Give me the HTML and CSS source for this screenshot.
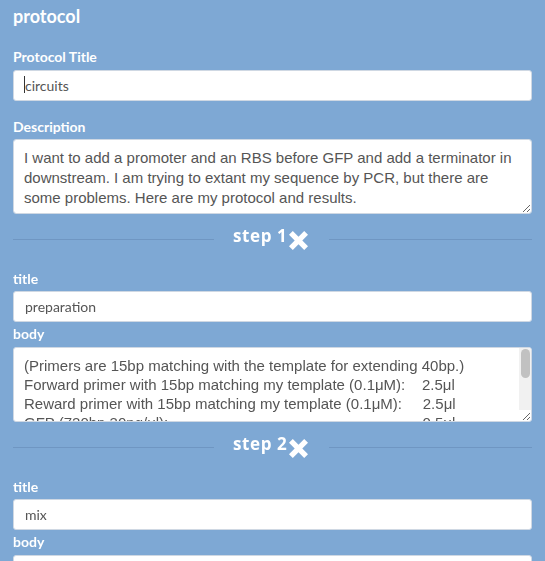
FILE: index.html
```html
<!DOCTYPE html>
<html>
<head>
<meta charset="utf-8">
<link rel="stylesheet" href="styles.css">
</head>
<body>
<main class="page">
  <h1 class="heading">protocol</h1>
  <label class="label label-first">Protocol Title</label>
  <div class="field-wrap">
    <input class="input" type="text" value="circuits">
    <span class="caret"></span>
  </div>
  <label class="label label-desc">Description</label>
  <textarea class="textarea desc">I want to add a promoter and an RBS before GFP and add a terminator in downstream. I am trying to extant my sequence by PCR, but there are some problems. Here are my protocol and results.</textarea>

  <section class="step">
    <div class="sep">
      <span class="sep-line sep-left"></span>
      <span class="sep-title"><span class="step-text">step 1</span><svg class="x" viewBox="0 0 20 20" width="19" height="19"><path d="M0 4 L4 0 L10 6 L16 0 L20 4 L14 10 L20 16 L16 20 L10 14 L4 20 L0 16 L6 10 Z" fill="#fff"/></svg></span>
      <span class="sep-line"></span>
    </div>
    <label class="label label-title">title</label>
    <input class="input" type="text" value="preparation">
    <label class="label label-body">body</label>
    <div class="ta-wrap">
      <textarea class="textarea body-ta">(Primers are 15bp matching with the template for extending 40bp.)
Forward primer with 15bp matching my template (0.1μM):    2.5μl
Reward primer with 15bp matching my template (0.1μM):     2.5μl
GFP (720bp 30ng/μl):                                                             0.5μl
dNTP:                                                                                      2.5μl</textarea>
      <div class="scroll-track"><div class="scroll-thumb"></div></div>
    </div>
  </section>

  <section class="step">
    <div class="sep">
      <span class="sep-line sep-left"></span>
      <span class="sep-title"><span class="step-text">step 2</span><svg class="x" viewBox="0 0 20 20" width="19" height="19"><path d="M0 4 L4 0 L10 6 L16 0 L20 4 L14 10 L20 16 L16 20 L10 14 L4 20 L0 16 L6 10 Z" fill="#fff"/></svg></span>
      <span class="sep-line"></span>
    </div>
    <label class="label label-title">title</label>
    <input class="input" type="text" value="mix">
    <label class="label label-body">body</label>
    <textarea class="textarea body-ta"></textarea>
  </section>
</main>
</body>
</html>
```

FILE: styles.css
```css
html, body {
  margin: 0;
  padding: 0;
  background: #7ea8d4;
  overflow: hidden;
}
.page {
  display: flex;
  flex-direction: column;
  padding: 0 13px;
  font-family: "Lato", sans-serif;
}
.heading {
  margin: 4px 0 0 0;
  font-family: "Lato", sans-serif;
  font-size: 18px;
  line-height: 24px;
  font-weight: 700;
  color: #fff;
}
.label {
  display: block;
  font-family: "Lato", sans-serif;
  font-weight: 700;
  font-size: 14px;
  line-height: 18px;
  color: #fff;
}
.label-first { margin-top: 20px; margin-bottom: 4px; }
.label-desc { margin-top: 17px; margin-bottom: 3px; }
.label-title { margin-top: 19px; margin-bottom: 3px; }
.label-body { margin-top: 3px; margin-bottom: 4px; }
.field-wrap {
  position: relative;
  display: flex;
}
.input {
  box-sizing: border-box;
  width: 100%;
  height: 31px;
  margin: 0;
  padding: 0 11px;
  border: 1px solid #cfd8e3;
  border-radius: 3px;
  background: #fff;
  font-family: "Lato", sans-serif;
  font-size: 14px;
  color: #555;
  outline: none;
}
.caret {
  position: absolute;
  left: 11px;
  top: 6px;
  width: 1px;
  height: 17px;
  background: #333;
}
.textarea {
  box-sizing: border-box;
  width: 100%;
  height: 75px;
  margin: 0;
  padding: 8px 10px;
  border: 1px solid #cfd8e3;
  border-radius: 3px;
  background: #fff;
  font-family: "Liberation Sans", Arial, sans-serif;
  font-size: 15px;
  color: #555;
  outline: none;
  display: block;
}
.desc {
  line-height: 20px;
  padding-top: 8px;
}
.ta-wrap {
  position: relative;
}
.body-ta {
  line-height: 19px;
  white-space: pre;
  overflow: hidden;
  padding-right: 20px;
}
.scroll-track {
  position: absolute;
  right: 1px;
  top: 1px;
  bottom: 12px;
  width: 12px;
  background: #f1f1f1;
  border-top-right-radius: 2px;
}
.scroll-thumb {
  margin: 1px 1px 0 2px;
  height: 29px;
  border-radius: 5px;
  background: #c1c1c1;
}
.step {
  display: flex;
  flex-direction: column;
}
.sep {
  display: flex;
  align-items: center;
  margin-top: 13px;
  height: 24px;
}
.sep-line {
  flex: 1;
  height: 1px;
  background: #6f96c2;
}
.sep-left {
  flex: none;
  width: 201px;
}
.sep-title {
  display: flex;
  align-items: flex-start;
  align-self: flex-start;
  height: 24px;
  padding: 0 21px 0 19px;
  color: #fff;
}
.step-text {
  font-family: "Open Sans", sans-serif;
  font-weight: 700;
  font-size: 17px;
  line-height: 18px;
  letter-spacing: 0.6px;
}
.x {
  margin-left: 2px;
  margin-top: 4px;
}
```
